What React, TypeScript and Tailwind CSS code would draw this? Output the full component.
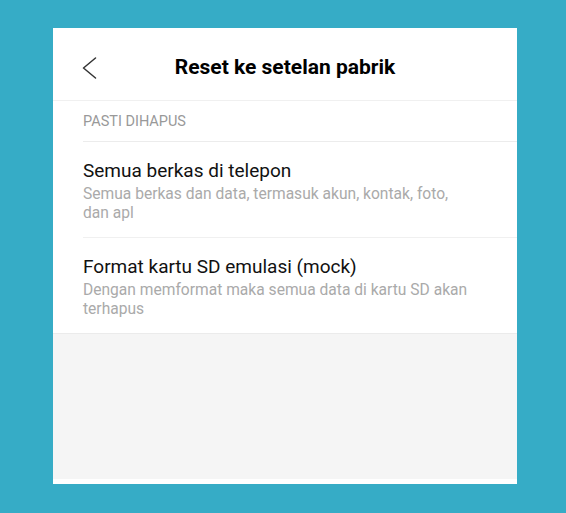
const items = [
  {
    title: "Semua berkas di telepon",
    desc: "Semua berkas dan data, termasuk akun, kontak, foto, dan apl",
  },
  {
    title: "Format kartu SD emulasi (mock)",
    desc: "Dengan memformat maka semua data di kartu SD akan terhapus",
  },
];

export default function App() {
  return (
    <div className="h-[513px] w-[566px] bg-[#36acc6] pl-[53px] pt-[28px] font-['Roboto',sans-serif]">
      <div className="flex h-[456px] w-[464px] flex-col bg-white pb-[5px]">
        <header className="relative flex h-[73px] shrink-0 items-center justify-center border-b border-[#f0f0f0] pt-[8px]">
          <svg
            className="absolute left-[29px] top-[29px]"
            width="15"
            height="22"
            viewBox="0 0 15 22"
            fill="none"
            stroke="#333"
            strokeWidth="1.5"
            strokeLinecap="round"
            strokeLinejoin="round"
          >
            <path d="M13.5 1 L1.5 11 L13.5 21" />
          </svg>
          <h1 className="text-[21px] font-bold text-black">Reset ke setelan pabrik</h1>
        </header>

        <div className="pl-[30px]">
          <div className="flex h-[41px] items-center border-b border-[#ececec] pt-[2px] text-[14.5px] text-[#999]">
            PASTI DIHAPUS
          </div>
          {items.map((item, i) => (
            <div
              key={item.title}
              className={`pr-[44px] pt-[17px] pb-[14px] ${i === 0 ? "border-b border-[#f0f0f0]" : ""}`}
            >
              <div className="text-[19px] leading-[24px] text-[#111]">{item.title}</div>
              <div className="mt-[2px] text-[15.6px] leading-[19px] text-[#aaa]">{item.desc}</div>
            </div>
          ))}
        </div>

        <div className="flex-1 border-t border-[#ebebeb] bg-[#f5f5f5]" />
      </div>
    </div>
  );
}
